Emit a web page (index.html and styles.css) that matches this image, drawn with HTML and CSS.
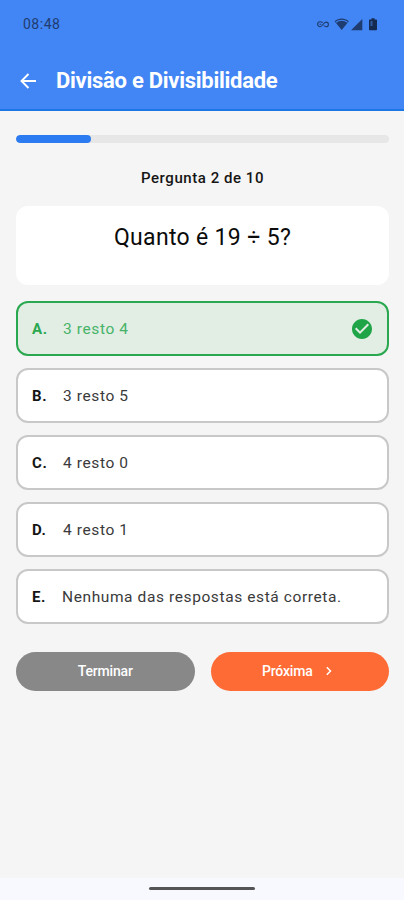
FILE: index.html
```html
<!DOCTYPE html>
<html lang="pt">
<head>
<meta charset="utf-8">
<meta name="viewport" content="width=device-width, initial-scale=1">
<title>Divisão e Divisibilidade</title>
<link rel="stylesheet" href="styles.css">
</head>
<body>
<div class="screen">
  <header class="header">
    <div class="status">
      <span class="clock">08:48</span>
      <svg class="status-icons" width="64" height="16" viewBox="0 0 64 16">
        <path d="M6.7 6.7C5.8 5.9 5 5.700 4.100 5.700a2.500 2.500 0 0 0 0 5c2.600 0 3.200-4.600 6-4.600a2.300 2.300 0 0 1 0 4.600c-1 0-1.600-.4-2.300-1.200M3.500 8.200h1.800" fill="none" stroke="#1f3c70" stroke-width="1.100"/>
        <path d="M18.600 5.200C22.700 1.600 28.700 1.600 32.800 5.200L25.700 14z" fill="#1f3c70"/>
        <path d="M19.900 6.200C23.300 3.600 28.100 3.600 31.500 6.200" fill="none" stroke="#4285f4" stroke-width="1.100"/>
        <path d="M35 14.200 46.300 3v11.200z" fill="#1f3c70"/>
        <path d="M55.500 2.200h3v1.300h1.700q.8 0 .8.800v9.200q0 .8-.8.800h-6.400q-.8 0-.8-.8V4.300q0-.8.8-.8h1.700z" fill="#152a50"/>
        <path d="M54.500 5h2v5h-2z" fill="#31599f"/>
      </svg>
    </div>
    <div class="title-row">
      <svg width="24" height="24" viewBox="0 0 24 24"><path d="M20 12H5.500M12.500 5l-7 7 7 7" fill="none" stroke="#fff" stroke-width="1.900"/></svg>
      <h1>Divisão e Divisibilidade</h1>
    </div>
  </header>
  <main class="content">
    <div class="progress"><div class="progress-fill"></div></div>
    <p class="counter">Pergunta 2 de 10</p>
    <section class="question">Quanto é 19 ÷ 5?</section>
    <div class="options">
      <div class="option correct"><b>A.</b><span>3 resto 4</span>
        <svg class="check" width="24" height="24" viewBox="0 0 24 24"><path fill="#1fa548" d="M12 2C6.480 2 2 6.480 2 12s4.480 10 10 10 10-4.480 10-10S17.520 2 12 2zm-2 15-5-5 1.410-1.410L10 14.170l7.590-7.590L19 8l-9 9z"/></svg>
      </div>
      <div class="option"><b>B.</b><span>3 resto 5</span></div>
      <div class="option"><b>C.</b><span>4 resto 0</span></div>
      <div class="option"><b>D.</b><span>4 resto 1</span></div>
      <div class="option"><b>E.</b><span class="long">Nenhuma das respostas está correta.</span></div>
    </div>
    <div class="actions">
      <div class="button finish">Terminar</div>
      <div class="button next">Próxima
        <svg width="8" height="12" viewBox="0 0 8 12"><path d="M1.800 2.300 5.500 6 1.800 9.700" fill="none" stroke="#fff" stroke-width="1.500"/></svg>
      </div>
    </div>
  </main>
  <footer class="nav"><div class="handle"></div></footer>
</div>
</body>
</html>
```
FILE: styles.css
```css
* { box-sizing: border-box; }
body { margin: 0; font-family: Roboto, "Liberation Sans", sans-serif; color: #151515; }
.screen { width: 404px; height: 900px; display: flex; flex-direction: column; background: #f5f5f5; }
.header { height: 111px; background: #4285f4; border-bottom: 2px solid #1c76e5; }
.status { height: 48px; padding: 0 23px; display: flex; justify-content: space-between; align-items: center; }
.clock { font-size: 14px; letter-spacing: .5px; color: #1f3c70; }
.status-icons { margin-right: 1px; }
.title-row { height: 65px; padding-left: 16px; display: flex; align-items: center; gap: 16px; }
h1 { margin: 0; font-size: 22px; line-height: 26px; font-weight: 700; letter-spacing: -.27px; color: #fff; }
.content { flex: 1; padding: 24px 15px 0 16px; }
.progress { height: 8px; border-radius: 4px; background: #e7e7e7; overflow: hidden; }
.progress-fill { width: 20%; height: 100%; border-radius: 4px; background: #2d7bf0; }
.counter { margin: 25px 0 0; text-align: center; font-size: 15px; line-height: 21px; font-weight: 500; letter-spacing: .55px; }
.question { margin-top: 17px; height: 79px; padding-top: 17px; border-radius: 12px; background: #fff; text-align: center; font-size: 23px; line-height: 30px; letter-spacing: .33px; color: #0b0b0b; }
.options { margin-top: 16px; display: grid; gap: 12.100px; }
.option { height: 55px; padding: 0 14px; border: 2px solid #c8c8c8; border-radius: 12px; background: #fff; display: flex; align-items: center; font-size: 15.500px; letter-spacing: .6px; color: #3a3a3a; }
.option b { width: 31px; font-weight: 700; font-size: 15px; color: #151515; }
.option .long { margin-left: -1px; }
.correct { border-color: #2aa850; background: #e2ede4; color: #46b468; }
.correct b { color: #2aa850; }
.check { margin-left: auto; margin-right: -.5px; }
.actions { margin-top: 27.600px; display: grid; grid-template-columns: 1fr 1fr; gap: 16px; }
.button { height: 39px; border-radius: 20px; display: flex; align-items: center; justify-content: center; font-size: 14px; font-weight: 500; letter-spacing: -.2px; color: #fff; }
.finish { background: #888; }
.next { background: #ff6b35; gap: 13px; padding-right: 4px; }
.nav { height: 22px; background: #f8f9fe; display: flex; justify-content: center; padding-top: 9px; }
.handle { width: 106px; height: 3px; border-radius: 2px; background: #555; }
```
